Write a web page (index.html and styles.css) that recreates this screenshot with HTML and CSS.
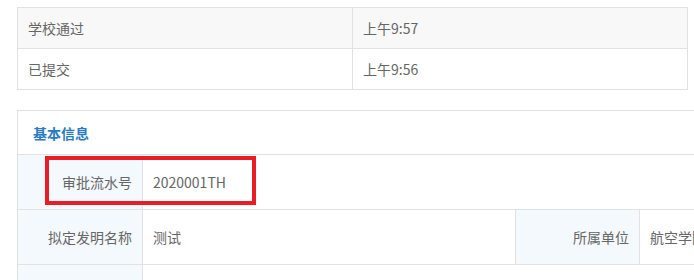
FILE: index.html
```html
<!DOCTYPE html>
<html lang="zh-CN">
  <head>
    <meta charset="UTF-8" />
    <meta name="viewport" content="width=device-width, initial-scale=1.0" />
    <title>审批详情</title>
    <link rel="stylesheet" href="styles.css">
  </head>

  <body>
    <div class="page">
      <!-- 审批记录 -->
      <table class="log">
        <colgroup>
          <col style="width: 335px" />
          <col />
        </colgroup>
        <tr class="odd">
          <td>学校通过</td>
          <td>上午9:57</td>
        </tr>
        <tr>
          <td>已提交</td>
          <td>上午9:56</td>
        </tr>
      </table>

      <!-- 基本信息 -->
      <div class="info-wrap">
        <table class="info">
          <colgroup>
            <col style="width: 125px" />
            <col style="width: 373px" />
            <col style="width: 124px" />
            <col />
          </colgroup>
          <tr>
            <th class="title" colspan="4">基本信息</th>
          </tr>
          <tr>
            <td class="label">审批流水号</td>
            <td class="value" colspan="3">2020001TH</td>
          </tr>
          <tr>
            <td class="label">拟定发明名称</td>
            <td class="value">测试</td>
            <td class="label">所属单位</td>
            <td class="value">航空学院</td>
          </tr>
          <tr>
            <td class="label"></td>
            <td class="value" colspan="3"></td>
          </tr>
        </table>
        <div class="mark"></div>
      </div>
    </div>
  </body>
</html>
```

FILE: styles.css
```css
body {
  margin: 0;
  font-family: "Noto Sans CJK SC", "Noto Sans", sans-serif;
  font-size: 14px;
  color: #666;
  background: #fff;
}

.page {
  width: 694px;
  height: 280px;
  overflow: hidden;
  padding: 7px 0 0 17px;
  box-sizing: border-box;
}

table {
  border-collapse: collapse;
  table-layout: fixed;
}

td,
th {
  border: 1px solid #e2e2e2;
  text-align: left;
  font-weight: normal;
}

.log {
  width: 671px;
}

.log td {
  height: 40px;
  padding: 0 10px;
}

.log .odd td {
  background-color: #f8f8f8;
}

.info-wrap {
  position: relative;
  margin-top: 20px;
  width: 840px;
}

.info {
  width: 840px;
}

.info tr td {
  height: 54px;
  padding: 0 10px;
}

.info .title {
  height: 43px;
  padding: 0 15px;
  color: #2b7bc2;
  font-weight: bold;
  border-right: none;
}

.info .label {
  background-color: #f4f9fd;
  text-align: right;
}

.mark {
  position: absolute;
  left: 28px;
  top: 46px;
  width: 203px;
  height: 41px;
  border: 4px solid #ea1c26;
}
```
